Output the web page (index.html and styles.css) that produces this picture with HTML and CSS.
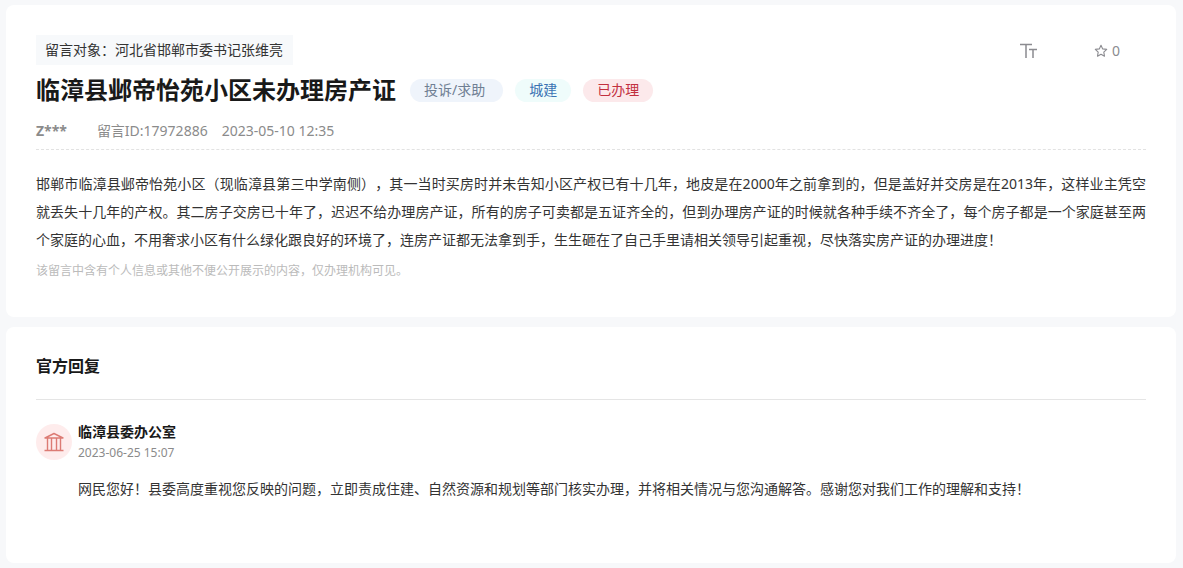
FILE: index.html
```html
<!DOCTYPE html>
<html lang="zh-CN">
<head>
<meta charset="utf-8">
<title>临漳县邺帝怡苑小区未办理房产证</title>
<link rel="stylesheet" href="styles.css">
</head>
<body>
<main class="page">
  <article class="card message">
    <header class="topbar">
      <p class="target">留言对象：河北省邯郸市委书记张维亮</p>
      <div class="actions">
        <button class="action" type="button" aria-label="字号">
          <svg class="icon-size" viewBox="0 0 18 16" width="18" height="16" aria-hidden="true">
            <path d="M0 1.5h12M6 1.5V15M9 6.5h8M13 6.5V15" fill="none" stroke="currentColor" stroke-width="1.5"/>
          </svg>
        </button>
        <button class="action" type="button" aria-label="收藏 0">
          <svg class="icon-star" viewBox="0 0 14 14" width="14" height="14" aria-hidden="true">
            <path d="M7 1.3l1.7 3.6 4 .5-2.9 2.8.7 4L7 10.3l-3.500 1.900.7-4L1.300 5.400l4-.5z" fill="none" stroke="currentColor" stroke-width="1.1" stroke-linejoin="round"/>
          </svg>
          <span>0</span>
        </button>
      </div>
    </header>
    <div class="heading">
      <h1 class="title">临漳县邺帝怡苑小区未办理房产证</h1>
      <span class="tag tag-type">投诉/求助</span>
      <span class="tag tag-field">城建</span>
      <span class="tag tag-state">已办理</span>
    </div>
    <div class="meta">
      <span class="author">Z***</span>
      <span>留言ID:17972886</span>
      <time datetime="2023-05-10T12:35">2023-05-10 12:35</time>
    </div>
    <p class="content">邯郸市临漳县邺帝怡苑小区（现临漳县第三中学南侧），其一当时买房时并未告知小区产权已有十几年，地皮是在2000年之前拿到的，但是盖好并交房是在2013年，这样业主凭空就丢失十几年的产权。其二房子交房已十年了，迟迟不给办理房产证，所有的房子可卖都是五证齐全的，但到办理房产证的时候就各种手续不齐全了，每个房子都是一个家庭甚至两个家庭的心血，不用奢求小区有什么绿化跟良好的环境了，连房产证都无法拿到手，生生砸在了自己手里请相关领导引起重视，尽快落实房产证的办理进度！</p>
    <p class="notice">该留言中含有个人信息或其他不便公开展示的内容，仅办理机构可见。</p>
  </article>
  <section class="card replies">
    <h2 class="section-title">官方回复</h2>
    <article class="reply">
      <span class="avatar">
        <svg viewBox="0 0 20 20" width="20" height="20" aria-hidden="true">
          <path d="M1 6L10 1.500 19 6zM3.500 6v12.500M7.500 6v12.500M12.500 6v12.500M16.500 6v12.500M.5 18.500h19" fill="none" stroke="currentColor" stroke-width="1.400" stroke-linejoin="round"/>
        </svg>
      </span>
      <div class="reply-main">
        <h3 class="office">临漳县委办公室</h3>
        <time class="reply-time" datetime="2023-06-25T15:07">2023-06-25 15:07</time>
        <p class="reply-text">网民您好！县委高度重视您反映的问题，立即责成住建、自然资源和规划等部门核实办理，并将相关情况与您沟通解答。感谢您对我们工作的理解和支持！</p>
      </div>
    </article>
  </section>
</main>
</body>
</html>
```
FILE: styles.css
```css
* {
  box-sizing: border-box;
}

body {
  margin: 0;
  background: #f7f8fa;
  color: #333;
  font: 14px/20px "Noto Sans", "Noto Sans CJK SC", sans-serif;
  text-spacing-trim: space-all;
}

h1, h2, h3, p {
  margin: 0;
}

.page {
  display: flex;
  flex-direction: column;
  gap: 10px;
  padding: 5px 7px 5px 6px;
}

.card {
  padding: 30px;
  border-radius: 8px;
  background: #fff;
}

.message {
  padding-bottom: 36px;
}

.topbar {
  display: flex;
  justify-content: space-between;
  align-items: center;
}

.target {
  padding: 5px 10px 5px 9px;
  background: #f7f9fb;
}

.actions {
  display: flex;
  gap: 56px;
  padding: 2px 26px 0 0;
}

.action {
  display: flex;
  align-items: center;
  gap: 4px;
  padding: 0;
  border: 0;
  background: none;
  color: #8b8b90;
  font: inherit;
  cursor: pointer;
}

.heading {
  display: flex;
  align-items: center;
  flex-wrap: wrap;
  gap: 12px;
  padding-top: 7px;
}

.title {
  margin-right: 2px;
  color: #191919;
  font-size: 24px;
  line-height: 36px;
}

.tag {
  padding: 1px 14px 2px;
  border-radius: 12px;
}

.tag-type {
  padding-right: 18px;
  background: #eff4fb;
  color: #6f7f93;
}

.tag-field {
  background: #effcfb;
  color: #3b73b3;
}

.tag-state {
  background: #fce9eb;
  color: #c2303f;
}

.meta {
  display: flex;
  gap: 14px;
  padding: 13px 0 8px;
  border-bottom: 1px dashed #e2e2e2;
  color: #8b8b8b;
}

.author {
  margin-right: 16px;
  font-weight: 700;
}

.content {
  padding-top: 20px;
  line-height: 28px;
  text-align: justify;
}

.notice {
  padding-top: 7px;
  color: #bbb;
  font-size: 12px;
}

.replies {
  padding-top: 29px;
  padding-bottom: 60px;
}

.section-title {
  padding-bottom: 23px;
  border-bottom: 1px solid #e5e5e5;
  color: #191919;
  font-size: 16px;
  line-height: 20px;
}

.reply {
  display: flex;
  gap: 6px;
  padding-top: 22px;
}

.avatar {
  display: flex;
  flex: none;
  align-items: center;
  justify-content: center;
  width: 36px;
  height: 36px;
  margin-top: 2px;
  border-radius: 50%;
  background: #feecec;
  color: #dc7b74;
}

.office {
  color: #191919;
  font-size: 14px;
  line-height: 20px;
}

.reply-time {
  display: block;
  color: #8b8b8b;
  font-size: 12px;
  line-height: 22px;
}

.reply-text {
  padding-top: 11px;
  line-height: 28px;
}
```
